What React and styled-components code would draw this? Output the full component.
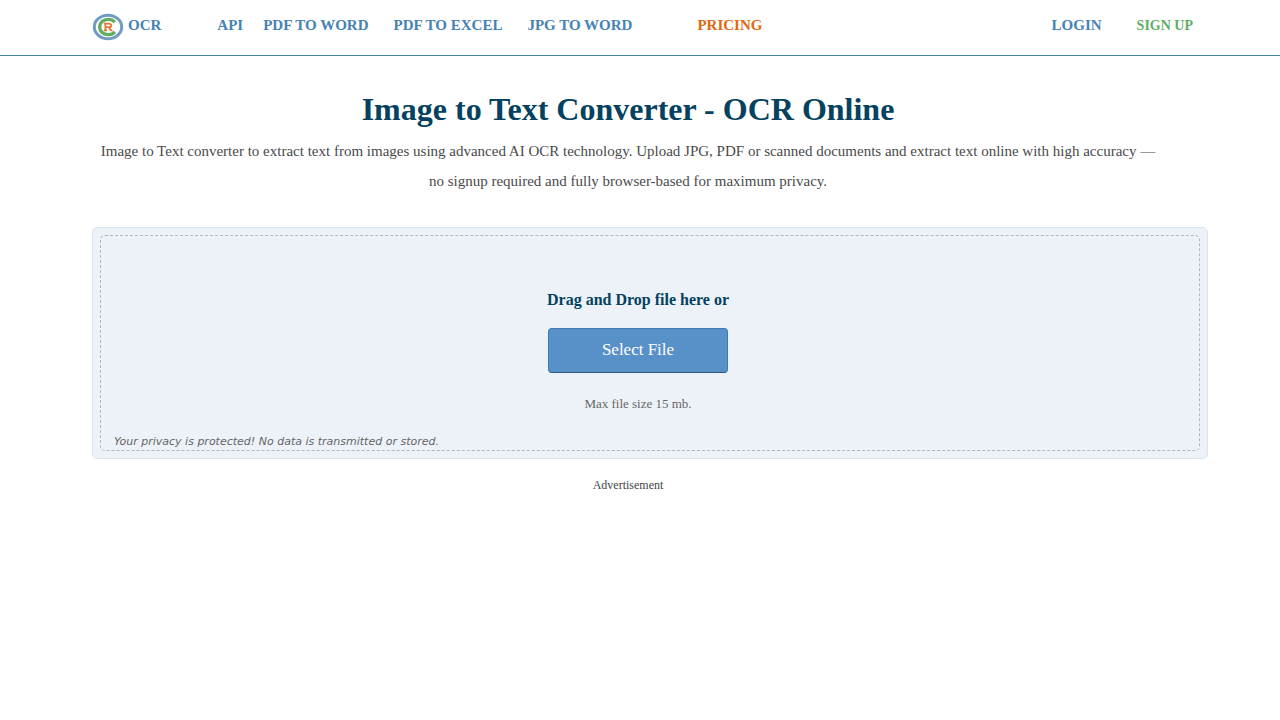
import React, { useRef } from 'react'
import styled, { createGlobalStyle } from 'styled-components'

const GlobalStyle = createGlobalStyle`
  * {
    box-sizing: border-box;
  }

  body {
    margin: 0;
    background: #fff;
    color: #444;
    font-family: "Liberation Serif", "Times New Roman", serif;
    font-size: 15px;
  }
`

const Header = styled.header`
  border-bottom: 1px solid #4682a0;
  padding: 0 87px 5px 92px;
`

const Bar = styled.div`
  display: flex;
  align-items: center;
  height: 50px;
`

const Brand = styled.a`
  display: flex;
  align-items: center;
  gap: 4px;
  margin-right: 56px;
  color: #4682b4;
  font-weight: bold;
  line-height: 18px;
  text-decoration: none;
`

const Logo = styled.svg`
  width: 32px;
  height: 28px;
  margin-top: 4px;
`

const Nav = styled.nav`
  display: flex;
  align-items: center;
  flex: 1;
`

const NavLink = styled.a`
  margin-left: ${props => props.$gap || 0}px;
  color: ${props => props.$color || '#4682b4'};
  font-size: ${props => props.$small ? '14px' : '15px'};
  font-weight: bold;
  line-height: ${props => props.$small ? '16px' : '18px'};
  white-space: nowrap;
  text-decoration: none;
`

const Account = styled.div`
  display: flex;
  align-items: baseline;
  gap: 35px;
`

const Main = styled.main`
  padding: 35px 72px 0 92px;
`

const Intro = styled.div`
  padding-right: 44px;
  text-align: center;
`

const Title = styled.h1`
  margin: 0 0 8px;
  color: #044260;
  font-size: 32px;
  line-height: 37px;
`

const Lead = styled.p`
  margin: 0;
  color: #4a4a4a;
  font-size: 15px;
  line-height: 30px;
`

const UploadBox = styled.section`
  margin-top: 31px;
  padding: 7px;
  border: 1px solid #d9e6ee;
  border-radius: 5px;
  background: #edf2f9;
`

const DropZone = styled.div`
  display: flex;
  flex-direction: column;
  align-items: center;
  padding: 54px 37px 0 13px;
  border: 1px dashed #b0b8bf;
  border-radius: 5px;
`

const DropTitle = styled.h2`
  margin: 0 0 18px;
  color: #044260;
  font-size: 16px;
  line-height: 20px;
`

const SelectButton = styled.button`
  width: 180px;
  height: 45px;
  padding: 0 0 2px;
  border: 1px solid #4079b3;
  border-bottom-color: #2b5a86;
  border-radius: 4px;
  background: #5890c8;
  color: #fff;
  font-family: inherit;
  font-size: 17px;
  cursor: pointer;
`

const SizeNote = styled.p`
  margin: 23px 0 21px;
  color: #666;
  font-size: 13px;
  line-height: 16px;
`

const Privacy = styled.em`
  align-self: flex-start;
  color: #666;
  font-family: "DejaVu Sans", Verdana, sans-serif;
  font-size: 11px;
  line-height: 17px;
`

const AdLabel = styled.p`
  margin: 18px 0 0;
  padding-right: 44px;
  font-size: 12px;
  line-height: 16px;
  text-align: center;
`

const links = [
  { text: 'API', href: '#api' },
  { text: 'PDF TO WORD', href: '#pdf-to-word', gap: 20 },
  { text: 'PDF TO EXCEL', href: '#pdf-to-excel', gap: 25 },
  { text: 'JPG TO WORD', href: '#jpg-to-word', gap: 25 },
  { text: 'PRICING', href: '#pricing', gap: 65, color: '#e2670f' },
]

const LogoMark = () => (
  <Logo viewBox="0 0 32 28" fill="none" aria-hidden="true">
    <ellipse cx="16" cy="14" rx="13.7" ry="11.7" fill="#fff" stroke="#6f9cc0" strokeWidth="3" />
    <path d="M22.8 9.2C21.2 7.3 19 6.4 16.4 6.4C11.2 6.4 7.6 9.7 7.6 14S11.2 21.6 16.4 21.6C19 21.6 21.2 20.7 22.8 18.8" stroke="#62ad62" strokeWidth="3.4" />
    <path d="M11.8 17.3H15M13.4 17.3V10.7M11.8 10.7H16.8C20 10.7 20 14.2 16.8 14.2H13.4M16.6 14.2L18.8 17.3H20.4" stroke="#e07a35" strokeWidth="1.8" />
  </Logo>
)

const App = () => {
  const fileInput = useRef(null)

  return (
    <>
      <GlobalStyle />
      <Header>
        <Bar>
          <Brand href="#home">
            <LogoMark />
            OCR
          </Brand>
          <Nav>
            {links.map(link => (
              <NavLink key={link.text} href={link.href} $gap={link.gap} $color={link.color}>
                {link.text}
              </NavLink>
            ))}
          </Nav>
          <Account>
            <NavLink href="#login">LOGIN</NavLink>
            <NavLink href="#signup" $color="#5fae62" $small>SIGN UP</NavLink>
          </Account>
        </Bar>
      </Header>
      <Main>
        <Intro>
          <Title>Image to Text Converter - OCR Online</Title>
          <Lead>
            Image to Text converter to extract text from images using advanced AI OCR technology.
            Upload JPG, PDF or scanned documents and extract text online with high accuracy —
            no signup required and fully browser-based for maximum privacy.
          </Lead>
        </Intro>
        <UploadBox>
          <DropZone>
            <DropTitle>Drag and Drop file here or</DropTitle>
            <SelectButton type="button" onClick={() => fileInput.current.click()}>
              Select File
            </SelectButton>
            <input ref={fileInput} type="file" hidden />
            <SizeNote>Max file size 15 mb.</SizeNote>
            <Privacy>Your privacy is protected! No data is transmitted or stored.</Privacy>
          </DropZone>
        </UploadBox>
        <AdLabel>Advertisement</AdLabel>
      </Main>
    </>
  )
}

export default App
